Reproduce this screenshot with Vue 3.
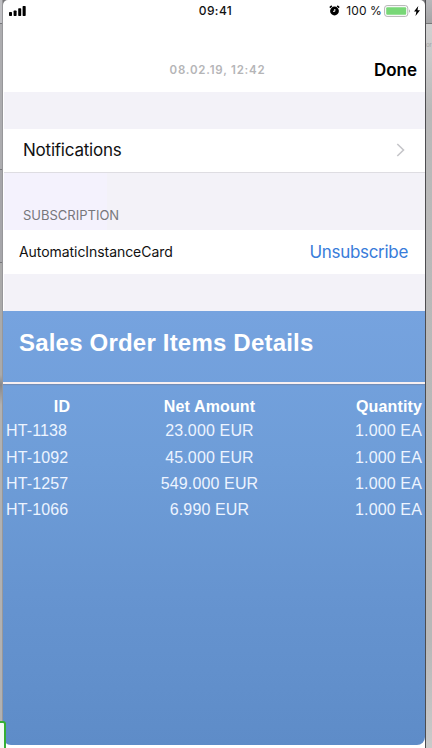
<script setup>
const columns = ['ID', 'Net Amount', 'Quantity']
const items = [
  { id: 'HT-1138', amount: '23.000 EUR', quantity: '1.000 EA' },
  { id: 'HT-1092', amount: '45.000 EUR', quantity: '1.000 EA' },
  { id: 'HT-1257', amount: '549.000 EUR', quantity: '1.000 EA' },
  { id: 'HT-1066', amount: '6.990 EUR', quantity: '1.000 EA' },
]
</script>

<template>
  <div class="desktop">
    <div class="edge left"></div>
    <main class="phone">
      <div class="status">
        <svg class="signal" width="18" height="12" viewBox="0 0 18 12">
          <rect x="0" y="7" width="3" height="4" rx=".7" />
          <rect x="4.6" y="5.5" width="3" height="5.5" rx=".7" />
          <rect x="9.2" y="3.2" width="3" height="7.8" rx=".7" />
          <rect x="13.6" y="1" width="3.1" height="10" rx=".7" />
        </svg>
        <span class="clock">09:41</span>
        <div class="power">
          <svg width="11" height="11" viewBox="0 0 11 11">
            <circle cx="5.5" cy="6" r="4.4" />
            <path d="M.8 2.6 2.8.9M10.2 2.6 8.2.9" stroke="#000" stroke-width="1.5" />
            <path d="M5.8 4v2.3H4" fill="none" stroke="#fff" stroke-width="1" />
          </svg>
          <span class="percent">100 %</span>
          <svg class="battery" width="27" height="12" viewBox="0 0 27 12">
            <rect x=".6" y=".6" width="23.2" height="10.8" rx="2.5" fill="#fff" stroke="#b3b3b3" />
            <rect x="2.2" y="2.2" width="20" height="7.6" rx="1" fill="#78d777" />
            <path d="M25.1 4.2q2 1.8 0 3.6z" fill="#aaa" />
          </svg>
          <svg class="bolt" width="6" height="10" viewBox="0 0 6 10"><path d="M4.3 0 0 5.6h2.4L1.5 10 6 4.2H3.5z" /></svg>
        </div>
      </div>
      <header class="nav">
        <span class="date">08.02.19, 12:42</span>
        <span class="done">Done</span>
      </header>
      <div class="gap"></div>
      <div class="row notifications">
        <span>Notifications</span>
        <svg width="10" height="14" viewBox="0 0 10 14"><path d="m1.3 1 6.2 6-6.2 6" fill="none" stroke="#c5c5c9" stroke-width="1.6" /></svg>
      </div>
      <div class="section"><span>SUBSCRIPTION</span></div>
      <div class="row subscription">
        <span class="name">AutomaticInstanceCard</span>
        <span class="link">Unsubscribe</span>
      </div>
      <div class="spacer"></div>
      <section class="card">
        <h1><span>Sales Order Items Details</span></h1>
        <div class="table">
          <div class="tr head"><span v-for="c in columns" :key="c">{{ c }}</span></div>
          <div v-for="i in items" :key="i.id" class="tr">
            <span>{{ i.id }}</span><span>{{ i.amount }}</span><span>{{ i.quantity }}</span>
          </div>
        </div>
      </section>
    </main>
    <div class="edge right"><span>or</span></div>
    <div class="marker"></div>
  </div>
</template>

<style>
body { margin: 0; overflow: hidden; background: #fff; }
</style>

<style scoped>
.desktop { position: relative; display: flex; width: 432px; height: 748px; overflow: hidden; font-family: Inter, "Liberation Sans", sans-serif; color: #111; background: linear-gradient(#77777a 0 8px, #fff 8px); }
.edge { box-sizing: border-box; flex: none; height: 748px; overflow: hidden; }
.left { width: 3px; border-right: 1px solid #97979a; background: linear-gradient(#bfbfc3 0 23px, #77777a 23px 24px, #acacaf 24px 169px, #77777a 169px 170px, #a6a6aa 170px 262px, #77777a 262px 263px, #aaa 263px 375px, #88888b 385px, #b1b1b1 405px); }
.right { width: 7px; border-left: 1px solid #4d4d50; background: linear-gradient(#b8b8bb 0, #a4a4a6 23px, #777 23px 24px, #d1d1d1 24px, #c9c9c9 58px, #b9b9b9 110px, #b8b8b8 640px, #cacaca); }
.right span { display: block; margin-top: 38px; font: 6.5px/14px "Liberation Sans", sans-serif; color: #a6a6a6; }
.phone { width: 422px; height: 745px; flex: none; overflow: hidden; border-radius: 5px 5px 8px 8px; background: #fff; }
.status { display: grid; grid-template-columns: 1fr auto 1fr; align-items: center; height: 22px; }
.signal { margin-left: 6px; margin-top: -1px; }
.clock { margin: -2px 0 0 3px; font-size: 12px; font-weight: 500; letter-spacing: .4px; }
.power { display: flex; align-items: center; justify-content: flex-end; padding-right: 5px; margin-top: -1px; }
.percent { margin: 0 2px 0 6px; font-size: 12px; line-height: 16px; letter-spacing: .1px; white-space: nowrap; }
.bolt { margin-left: 3px; }
.nav { display: grid; grid-template-columns: 1fr auto 1fr; align-items: center; height: 70px; padding: 26px 8px 0 8px; box-sizing: border-box; }
.date { grid-column: 2; margin-left: 7px; color: #b5b5b7; font-size: 11.5px; font-weight: 600; letter-spacing: .78px; white-space: nowrap; }
.done { justify-self: end; color: #000; font-size: 17px; font-weight: 600; }
.gap, .section, .spacer { margin-left: 1px; background: #f3f2f8; }
.gap { height: 37px; }
.row { display: flex; align-items: center; justify-content: space-between; box-sizing: border-box; height: 43px; }
.notifications { padding: 0 19px 1px 20px; font-size: 17px; letter-spacing: -.22px; }
.section { display: flex; align-items: flex-end; box-sizing: border-box; height: 58px; padding: 0 19px 7px; border-top: 1px solid #dedde2; background: linear-gradient(90deg, #f4f2fd 0 103px, #f3f2f8 103px); color: #77777b; font-size: 13px; line-height: 16px; }
.subscription { height: 44px; padding: 0 17px 0 16px; }
.name { margin-top: -2px; font-size: 14px; letter-spacing: -.06px; }
.link { color: #387cda; font-size: 17px; letter-spacing: -.3px; }
.spacer { height: 37px; }
.card { height: 434px; background: linear-gradient(#76a3df, #6e9dd8 35%, #6694d0 65%, #5e8cc8); color: #fff; font-family: "Liberation Sans", Arial, sans-serif; }
h1 { box-sizing: border-box; height: 73px; margin: 0; padding: 16px 16px 0; border-bottom: 2px solid #f8f0f1; box-shadow: 0 1px 1px #718eba; font-size: 24px; line-height: 32px; letter-spacing: .2px; white-space: nowrap; }
.table { padding: 10px 3px 0 3px; font-size: 16px; letter-spacing: .14px; }
.tr { display: grid; grid-template-columns: 112px 183px 121px; height: 26.4px; line-height: 26px; color: #edf4ff; }
.tr span { white-space: nowrap; }
.tr span:nth-child(2) { text-align: center; }
.tr span:nth-child(3) { text-align: right; }
.head { height: 24.2px; color: #fff; font-weight: bold; }
.head span:first-child { text-align: center; }
.marker { position: absolute; left: -7px; top: 721px; width: 9px; height: 35px; border: 2px solid #35ae35; border-radius: 3px; background: #f4fbf5; }
</style>
